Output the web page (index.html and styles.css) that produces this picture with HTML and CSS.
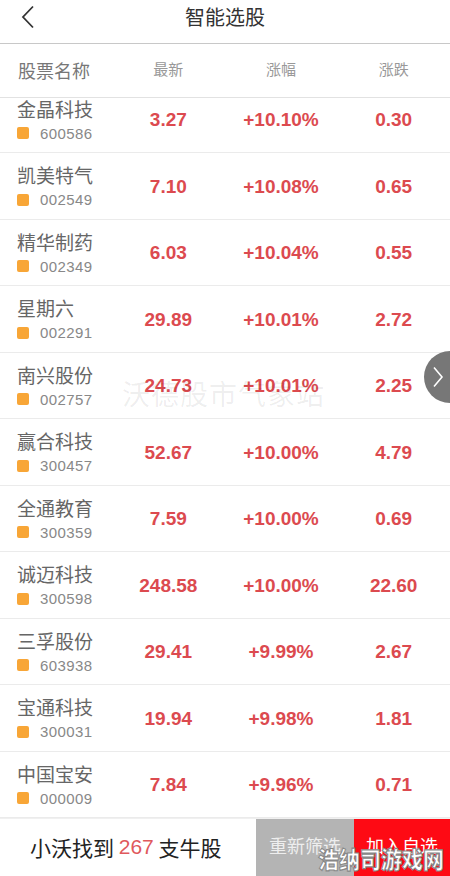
FILE: index.html
```html
<!DOCTYPE html>
<html lang="zh">

<head>
    <meta charset="UTF-8">
    <title>智能选股</title>
    <link rel="stylesheet" href="styles.css">
</head>

<body>

    <!-- 顶部导航 -->
    <div class="topbar">
        <svg class="back" width="14" height="24" viewBox="0 0 14 24">
            <path d="M12 1.5 L2 12 L12 22.5" fill="none" stroke="#333" stroke-width="1.8" />
        </svg>
        <h1>智能选股</h1>
    </div>

    <!-- 表头 -->
    <div class="colhead">
        <div class="c-name">股票名称</div>
        <div>最新</div>
        <div>涨幅</div>
        <div>涨跌</div>
    </div>

    <div class="listwrap">
        <div class="list">
            <div class="row">
                <div class="c-name"><div class="nm">金晶科技</div><div class="code"><i></i>600586</div></div>
                <div class="num">3.27</div><div class="num">+10.10%</div><div class="num">0.30</div>
            </div>
            <div class="row">
                <div class="c-name"><div class="nm">凯美特气</div><div class="code"><i></i>002549</div></div>
                <div class="num">7.10</div><div class="num">+10.08%</div><div class="num">0.65</div>
            </div>
            <div class="row">
                <div class="c-name"><div class="nm">精华制药</div><div class="code"><i></i>002349</div></div>
                <div class="num">6.03</div><div class="num">+10.04%</div><div class="num">0.55</div>
            </div>
            <div class="row">
                <div class="c-name"><div class="nm">星期六</div><div class="code"><i></i>002291</div></div>
                <div class="num">29.89</div><div class="num">+10.01%</div><div class="num">2.72</div>
            </div>
            <div class="row">
                <div class="c-name"><div class="nm">南兴股份</div><div class="code"><i></i>002757</div></div>
                <div class="num">24.73</div><div class="num">+10.01%</div><div class="num">2.25</div>
            </div>
            <div class="row">
                <div class="c-name"><div class="nm">赢合科技</div><div class="code"><i></i>300457</div></div>
                <div class="num">52.67</div><div class="num">+10.00%</div><div class="num">4.79</div>
            </div>
            <div class="row">
                <div class="c-name"><div class="nm">全通教育</div><div class="code"><i></i>300359</div></div>
                <div class="num">7.59</div><div class="num">+10.00%</div><div class="num">0.69</div>
            </div>
            <div class="row">
                <div class="c-name"><div class="nm">诚迈科技</div><div class="code"><i></i>300598</div></div>
                <div class="num">248.58</div><div class="num">+10.00%</div><div class="num">22.60</div>
            </div>
            <div class="row">
                <div class="c-name"><div class="nm">三孚股份</div><div class="code"><i></i>603938</div></div>
                <div class="num">29.41</div><div class="num">+9.99%</div><div class="num">2.67</div>
            </div>
            <div class="row">
                <div class="c-name"><div class="nm">宝通科技</div><div class="code"><i></i>300031</div></div>
                <div class="num">19.94</div><div class="num">+9.98%</div><div class="num">1.81</div>
            </div>
            <div class="row">
                <div class="c-name"><div class="nm">中国宝安</div><div class="code"><i></i>000009</div></div>
                <div class="num">7.84</div><div class="num">+9.96%</div><div class="num">0.71</div>
            </div>
        </div>

        <!-- 水印 -->
        <div class="mark">沃德股市气象站</div>

        <!-- 右侧翻页按钮 -->
        <div class="sidebtn">
            <svg width="12" height="22" viewBox="0 0 12 22">
                <path d="M2 1.5 L10 11 L2 20.5" fill="none" stroke="#fff" stroke-width="1.6" />
            </svg>
        </div>
    </div>

    <!-- 底部操作栏 -->
    <div class="bottombar">
        <div class="found">小沃找到 <span>267</span> 支牛股</div>
        <div class="btn gray">重新筛选</div>
        <div class="btn red">加入自选</div>
        <div class="sitemark">浩纳司游戏网</div>
    </div>

</body>

</html>
```

FILE: styles.css
```css
body {
    margin: 0;
    width: 450px;
    height: 876px;
    overflow: hidden;
    background: #fff;
    font-family: "Liberation Sans", "Noto Sans CJK SC", sans-serif;
    position: relative;
}

.topbar {
    height: 43px;
    border-bottom: 1px solid #c8c8c8;
    display: flex;
    justify-content: center;
    position: relative;
}

.topbar h1 {
    margin: 0;
    padding-top: 3px;
    font-size: 20px;
    line-height: 28px;
    font-weight: normal;
    color: #333;
    font-family: "Noto Sans CJK SC", sans-serif;
}

.back {
    position: absolute;
    left: 21px;
    top: 5px;
}

.colhead,
.row {
    display: grid;
    grid-template-columns: 112px 1fr 1fr 1fr;
    align-items: center;
}

.colhead {
    height: 53px;
    border-bottom: 1px solid #e2e2e2;
    color: #999;
    font-size: 15px;
    text-align: center;
    font-family: "Noto Sans CJK SC", sans-serif;
}

.colhead .c-name {
    text-align: left;
    padding-left: 18px;
    font-size: 18px;
    color: #777;
    padding-top: 2px;
}

.colhead div {
    padding-bottom: 4px;
}

.listwrap {
    height: 720px;
    overflow: hidden;
    position: relative;
}

.list {
    margin-top: -11.5px;
}

.row {
    height: 65.5px;
    border-bottom: 1px solid #ebebeb;
}

.c-name {
    padding-left: 17px;
}

.nm {
    font-family: "Noto Sans CJK SC", sans-serif;
    font-size: 19px;
    color: #666;
    line-height: 24px;
    white-space: nowrap;
}

.code {
    display: flex;
    align-items: center;
    font-size: 15px;
    color: #888;
    margin-top: 4px;
    letter-spacing: 0.4px;
}

.code i {
    width: 12px;
    height: 12px;
    border-radius: 2px;
    background: #f8a637;
    margin-right: 11px;
}

.num {
    text-align: center;
    font-size: 19px;
    font-weight: bold;
    color: #dc4a4f;
    padding-top: 2px;
}

.mark {
    position: absolute;
    left: 122px;
    top: 275px;
    font-size: 28px;
    color: rgba(0, 0, 0, 0.07);
    font-family: "Noto Sans CJK SC", sans-serif;
    letter-spacing: 1px;
}

.sidebtn {
    position: absolute;
    left: 424px;
    top: 253px;
    width: 52px;
    height: 52px;
    border-radius: 50%;
    background: #777;
    display: flex;
    align-items: center;
    padding-left: 8px;
    box-sizing: border-box;
}

.bottombar {
    height: 58px;
    display: flex;
    align-items: stretch;
    position: relative;
    border-top: 1px solid #f0f0f0;
    font-family: "Noto Sans CJK SC", sans-serif;
}

.found {
    flex: 1;
    display: flex;
    align-items: center;
    padding-left: 30px;
    padding-bottom: 3px;
    font-size: 21px;
    color: #222;
    white-space: pre;
}

.found span {
    color: #e0595c;
    font-family: "Liberation Sans", sans-serif;
}

.btn {
    display: flex;
    align-items: center;
    justify-content: center;
    padding-bottom: 6px;
    font-size: 18px;
    color: #fff;
}

.gray {
    width: 98px;
    background: #b4b4b4;
    color: #eee;
}

.red {
    width: 96px;
    background: #fe0a14;
}

.sitemark {
    position: absolute;
    left: 318px;
    top: 27px;
    font-size: 21px;
    line-height: 24px;
    font-weight: 900;
    color: #fff;
    white-space: nowrap;
    -webkit-text-stroke: 1px #888;
    transform: scaleY(1.1);
}
```
